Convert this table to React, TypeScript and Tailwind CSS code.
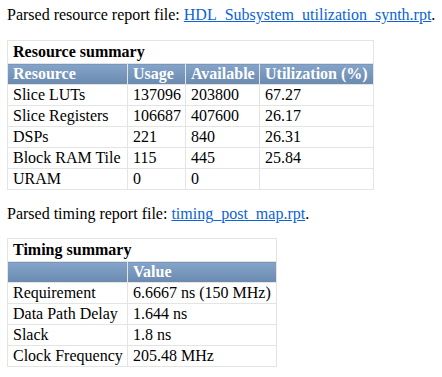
import React from 'react';

const resourceRows = [
  ['Slice LUTs', '137096', '203800', '67.27'],
  ['Slice Registers', '106687', '407600', '26.17'],
  ['DSPs', '221', '840', '26.31'],
  ['Block RAM Tile', '115', '445', '25.84'],
  ['URAM', '0', '0', ''],
];

const timingRows = [
  ['Requirement', '6.6667 ns (150 MHz)'],
  ['Data Path Delay', '1.644 ns'],
  ['Slack', '1.8 ns'],
  ['Clock Frequency', '205.48 MHz'],
];

const base = 'border border-[#e4e4e4] pl-[5px] pr-[4px] py-[1px] text-left align-middle whitespace-nowrap';
const head = `${base} font-bold text-white bg-gradient-to-b from-[#85a4c8] to-[#6a8ab0]`;

const ReportTable: React.FC<{
  title: string;
  headers: string[];
  widths: string[];
  rows: string[][];
}> = ({ title, headers, widths, rows }) => (
  <table className="border-collapse border border-[#e4e4e4] leading-[18px]">
    <tbody>
      <tr>
        <th colSpan={headers.length} className={`${base} font-bold !py-[2px]`}>
          {title}
        </th>
      </tr>
      <tr>
        {headers.map((h, i) => (
          <th key={i} className={`${head} ${widths[i]}`}>
            {h}
          </th>
        ))}
      </tr>
      {rows.map((r, i) => (
        <tr key={i}>
          {r.map((c, j) => (
            <td key={j} className={`${base} font-normal`}>
              {c}
            </td>
          ))}
        </tr>
      ))}
    </tbody>
  </table>
);

export default function App() {
  return (
    <div className="bg-white text-black text-[16px] font-['Liberation_Serif',serif] pl-[7px] pt-[6px] min-h-[377px]">
      <p className="leading-[18px] mb-[16px] whitespace-nowrap">
        Parsed resource report file:{' '}
        <a href="#" className="text-[#0b63d6] underline">
          HDL_Subsystem_utilization_synth.rpt
        </a>
        .
      </p>
      <ReportTable
        title="Resource summary"
        headers={['Resource', 'Usage', 'Available', 'Utilization (%)']}
        widths={['w-[120px]', 'w-[58px]', 'w-[74px]', 'w-[114px]']}
        rows={resourceRows}
      />
      <p className="leading-[18px] mt-[15px] mb-[15px] whitespace-nowrap">
        Parsed timing report file:{' '}
        <a href="#" className="text-[#0b63d6] underline">
          timing_post_map.rpt
        </a>
        .
      </p>
      <ReportTable
        title="Timing summary"
        headers={['', 'Value']}
        widths={['w-[120px]', 'w-[149px]']}
        rows={timingRows}
      />
    </div>
  );
}
